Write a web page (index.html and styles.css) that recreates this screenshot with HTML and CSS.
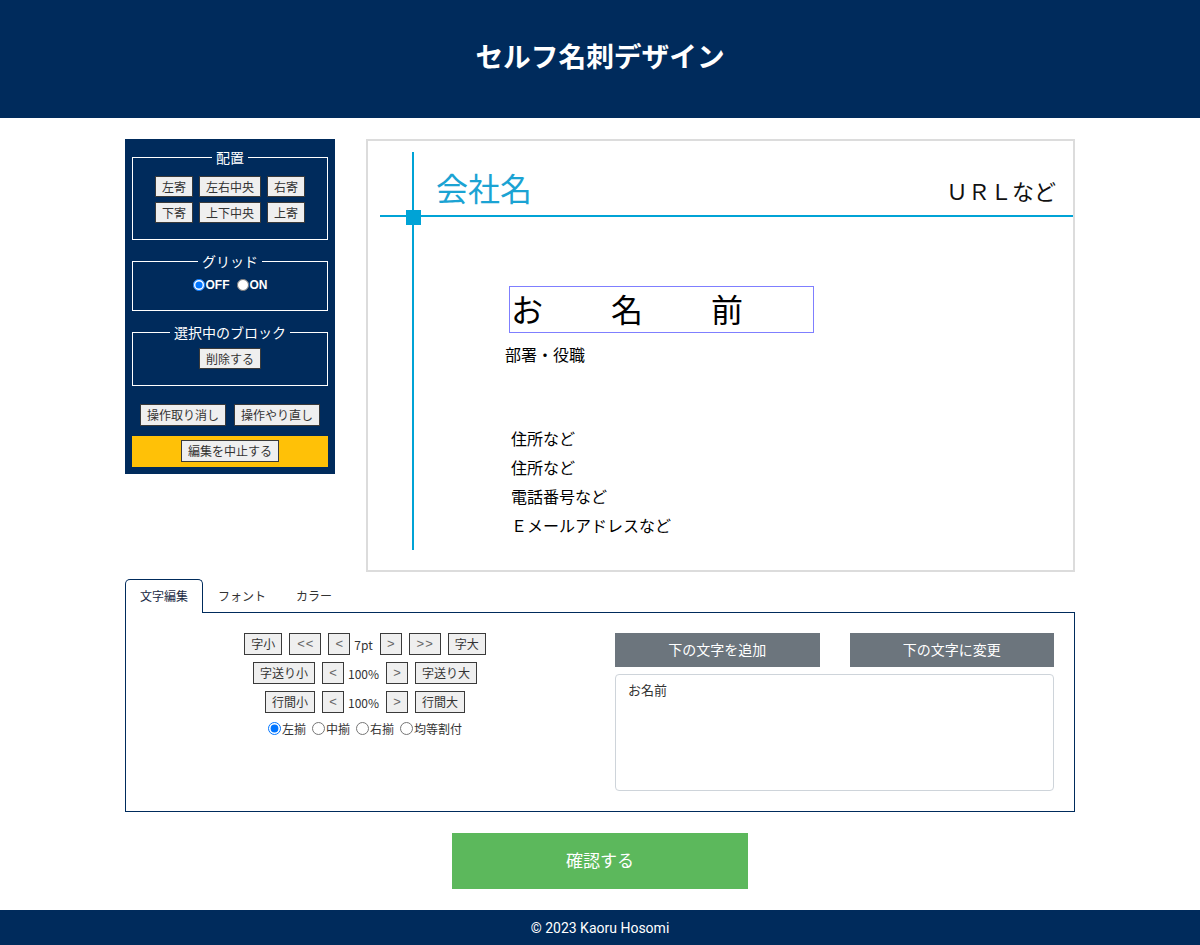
FILE: index.html
```html
<!DOCTYPE html>
<html lang="ja">
<head>
<meta charset="utf-8">
<title>セルフ名刺デザイン</title>
<link rel="stylesheet" href="styles.css">
</head>
<body>
<header class="site-header">
  <h1 class="site-title">セルフ名刺デザイン</h1>
</header>

<main class="container">
  <div class="editor">
    <aside class="tools">
      <fieldset class="group">
        <legend>配置</legend>
        <div class="btn-rows">
          <div class="btn-row tight">
            <button class="btn">左寄</button>
            <button class="btn">左右中央</button>
            <button class="btn">右寄</button>
          </div>
          <div class="btn-row tight">
            <button class="btn">下寄</button>
            <button class="btn">上下中央</button>
            <button class="btn">上寄</button>
          </div>
        </div>
      </fieldset>
      <fieldset class="group group-grid">
        <legend>グリッド</legend>
        <div class="grid-toggle">
          <label><input type="radio" name="grid" checked>OFF</label>
          <label><input type="radio" name="grid">ON</label>
        </div>
      </fieldset>
      <fieldset class="group group-sel">
        <legend>選択中のブロック</legend>
        <div class="btn-row">
          <button class="btn">削除する</button>
        </div>
      </fieldset>
      <div class="btn-row undo-row">
        <button class="btn">操作取り消し</button>
        <button class="btn">操作やり直し</button>
      </div>
      <div class="cancel-box">
        <button class="btn">編集を中止する</button>
      </div>
    </aside>

    <section class="card">
      <div class="guide guide-v"></div>
      <div class="guide guide-h"></div>
      <div class="guide-knot"></div>
      <div class="item company">会社名</div>
      <div class="item url">ＵＲＬなど</div>
      <div class="item name-box">お　名　前</div>
      <div class="item dept">部署・役職</div>
      <div class="item address">
        <div>住所など</div>
        <div>住所など</div>
        <div>電話番号など</div>
        <div>Ｅメールアドレスなど</div>
      </div>
    </section>
  </div>

  <nav class="tabs">
    <div class="tab active">文字編集</div>
    <div class="tab">フォント</div>
    <div class="tab">カラー</div>
  </nav>
  <section class="panel">
    <div class="controls">
      <div class="ctrl-row">
        <button class="btn btn-lg">字小</button>
        <button class="btn btn-lg arrow double">&lt;&lt;</button>
        <button class="btn btn-lg arrow">&lt;</button>
        <span class="value">7pt</span>
        <button class="btn btn-lg arrow">&gt;</button>
        <button class="btn btn-lg arrow double">&gt;&gt;</button>
        <button class="btn btn-lg">字大</button>
      </div>
      <div class="ctrl-row">
        <button class="btn btn-lg">字送り小</button>
        <button class="btn btn-lg arrow">&lt;</button>
        <span class="value">100%</span>
        <button class="btn btn-lg arrow">&gt;</button>
        <button class="btn btn-lg">字送り大</button>
      </div>
      <div class="ctrl-row">
        <button class="btn btn-lg">行間小</button>
        <button class="btn btn-lg arrow">&lt;</button>
        <span class="value">100%</span>
        <button class="btn btn-lg arrow">&gt;</button>
        <button class="btn btn-lg">行間大</button>
      </div>
      <div class="align-row">
        <label><input type="radio" name="align" checked>左揃</label>
        <label><input type="radio" name="align">中揃</label>
        <label><input type="radio" name="align">右揃</label>
        <label><input type="radio" name="align">均等割付</label>
      </div>
    </div>
    <div class="text-edit">
      <div class="action-row">
        <button class="action">下の文字を追加</button>
        <button class="action">下の文字に変更</button>
      </div>
      <textarea class="text-input">お名前</textarea>
    </div>
  </section>

  <div class="confirm-wrap">
    <button class="confirm">確認する</button>
  </div>
</main>

<footer class="site-footer">© 2023 Kaoru Hosomi</footer>
</body>
</html>
```

FILE: styles.css
```css
* { box-sizing: border-box; }

html, body {
  margin: 0;
  padding: 0;
}

body {
  font-family: "Noto Sans CJK JP", "Noto Sans", sans-serif;
  color: #222;
  background: #fff;
}

.site-header {
  background: #002b5c;
  height: 118px;
  display: flex;
  align-items: center;
  justify-content: center;
}

.site-title {
  margin: 0;
  color: #fff;
  font-size: 27.7px;
  font-weight: 700;
  line-height: 1;
  padding-bottom: 6px;
}

.container {
  width: 950px;
  margin: 21px auto 0;
}

.editor {
  display: flex;
  gap: 31px;
  align-items: flex-start;
}

/* ---------- sidebar ---------- */
.tools {
  width: 210px;
  flex: none;
  background: #002b5c;
  padding: 8px 7px 7px;
}

.group {
  margin: 0 0 11px;
  border: 1px solid #fff;
  padding: 6px 0 16px;
  min-width: 0;
}

.group-grid {
  padding-bottom: 17px;
}

.group-sel {
  margin-top: 1px;
  padding-bottom: 16px;
}

.group legend {
  margin: 0 auto;
  padding: 0 4px;
  color: #fff;
  font-size: 14px;
  line-height: 20px;
}

.btn-rows {
  margin-top: 3px;
  display: flex;
  flex-direction: column;
  gap: 5px;
}

.btn-row {
  display: flex;
  justify-content: center;
  gap: 8px;
}

.btn-row.tight {
  gap: 6px;
}

.btn {
  font-family: "Noto Sans CJK JP", sans-serif;
  font-size: 12px;
  line-height: 19px;
  padding: 0 6px;
  border: 1px solid #3a3a3a;
  background: #efefef;
  color: #333;
  border-radius: 0;
}

.btn-lg { line-height: 20px; }

.grid-toggle {
  display: flex;
  justify-content: center;
  gap: 7px;
  height: 16px;
  align-items: center;
}

.grid-toggle label {
  display: flex;
  align-items: center;
  color: #fff;
  font-family: "Liberation Sans", Arial, sans-serif;
  font-weight: 700;
  font-size: 12px;
}

.grid-toggle input {
  margin: 0 1px 0 0;
  width: 12px;
  height: 12px;
}

.undo-row {
  margin-top: 18px;
}

.undo-row .btn {
  line-height: 20px;
}

.cancel-box {
  margin-top: 10px;
  background: #ffc107;
  padding: 4px 0 5px;
  display: flex;
  justify-content: center;
}

.cancel-box .btn {
  line-height: 20px;
}

/* ---------- card canvas ---------- */
.card {
  position: relative;
  width: 709px;
  height: 433px;
  border: 2px solid #dcdcdc;
  background: #fff;
}

.guide {
  position: absolute;
  background: #00a3d6;
}

.guide-v {
  left: 44px;
  top: 11px;
  width: 2px;
  height: 398px;
}

.guide-h {
  left: 12px;
  right: 0;
  top: 74px;
  height: 2px;
}

.guide-knot {
  position: absolute;
  left: 38px;
  top: 69px;
  width: 15px;
  height: 15px;
  background: #00a3d6;
}

.item {
  position: absolute;
  white-space: nowrap;
  line-height: 1;
}

.company {
  left: 68px;
  top: 30px;
  font-size: 32px;
  color: #1ba3d3;
}

.url {
  right: 17px;
  top: 38px;
  font-size: 22px;
  color: #111;
}

.name-box {
  left: 141px;
  top: 145px;
  width: 305px;
  height: 47px;
  border: 1px solid #7f7fff;
  font-size: 32px;
  line-height: 43px;
  letter-spacing: 18px;
  padding-left: 1px;
  color: #000;
}

.dept {
  left: 137px;
  top: 205px;
  font-size: 16px;
  color: #000;
}

.address {
  left: 143px;
  top: 283px;
  font-size: 16px;
  line-height: 29px;
  color: #000;
}

/* ---------- tabs ---------- */
.tabs {
  display: flex;
  margin-top: 7px;
  position: relative;
  z-index: 1;
}

.tab {
  padding: 0 14px;
  height: 34px;
  line-height: 31px;
  font-size: 12px;
  color: #333;
  border: 1px solid transparent;
  border-bottom: none;
  border-radius: 5px 5px 0 0;
}

.tab.active {
  border-color: #002b5c;
  background: #fff;
  color: #1b2a44;
}

.panel {
  margin-top: -1px;
  height: 200px;
  border: 1px solid #002b5c;
  padding: 20px 20px 20px 4px;
  display: grid;
  grid-template-columns: 1fr 439px;
  gap: 15px;
}

.controls {
  display: flex;
  flex-direction: column;
  align-items: center;
  gap: 7px;
}

.ctrl-row {
  display: flex;
  align-items: center;
  gap: 7px;
}

.arrow {
  color: #666;
  font-family: "Liberation Sans", Arial, sans-serif;
  font-size: 13px;
  padding: 0;
  width: 22px;
  text-align: center;
}

.arrow.double {
  width: 32px;
  letter-spacing: 1px;
  text-indent: 1px;
}

.value {
  font-size: 12px;
  color: #333;
  margin-left: -3px;
}

.align-row {
  display: flex;
  align-items: center;
  gap: 6px;
  font-size: 12px;
  color: #333;
}

.align-row label {
  display: flex;
  align-items: center;
}

.align-row input {
  margin: 0 1px 0 0;
  width: 13px;
  height: 13px;
}

.text-edit {
  display: flex;
  flex-direction: column;
  gap: 7px;
}

.action-row {
  display: grid;
  grid-template-columns: 1fr 1fr;
  gap: 30px;
}

.action {
  height: 34px;
  border: none;
  background: #6c757d;
  color: #fff;
  font-family: "Noto Sans CJK JP", sans-serif;
  font-size: 14px;
  padding: 0 0 2px;
}

.text-input {
  height: 117px;
  width: 100%;
  resize: none;
  border: 1px solid #ced4da;
  border-radius: 4px;
  padding: 5px 12px;
  font-family: "Noto Sans CJK JP", sans-serif;
  font-size: 13px;
  line-height: 20px;
  color: #333;
}

/* ---------- confirm & footer ---------- */
.confirm-wrap {
  display: flex;
  justify-content: center;
  margin: 21px 0 21px;
}

.confirm {
  width: 296px;
  height: 56px;
  border: none;
  background: #5cb85c;
  color: #fff;
  font-family: "Noto Sans CJK JP", sans-serif;
  font-size: 17px;
  padding: 0 0 3px;
}

.site-footer {
  background: #002b5c;
  height: 35px;
  display: flex;
  align-items: center;
  justify-content: center;
  color: #fff;
  font-family: Roboto, "Liberation Sans", sans-serif;
  font-size: 14px;
}
```
